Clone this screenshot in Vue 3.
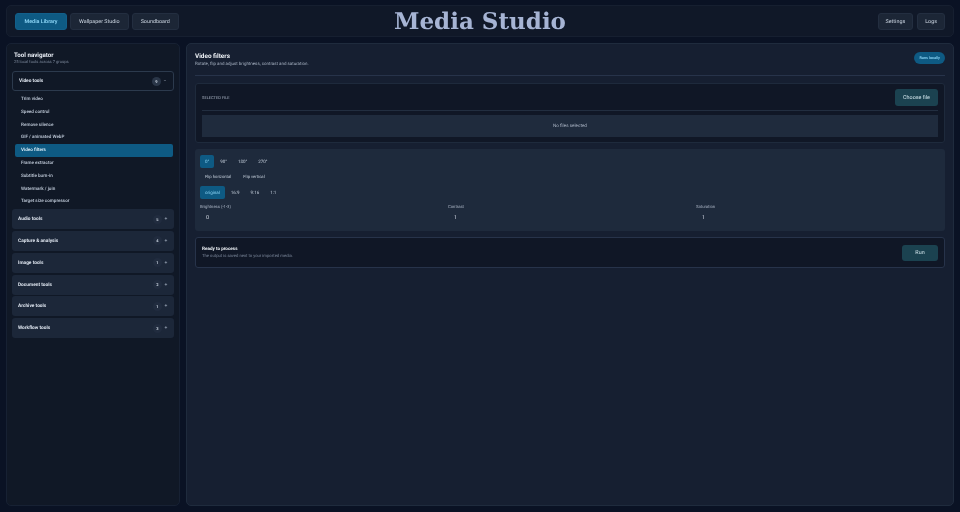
<script setup>
const tabs = [
  { label: 'Media Library', active: true },
  { label: 'Wallpaper Studio' },
  { label: 'Soundboard' }
]
const tools = ['Trim video', 'Speed control', 'Remove silence', 'GIF / animated WebP', 'Video filters', 'Frame extractor', 'Subtitle burn-in', 'Watermark / join', 'Target size compressor']
const groups = [
  ['Audio tools', 5], ['Capture & analysis', 4], ['Image tools', 1], ['Document tools', 2], ['Archive tools', 1], ['Workflow tools', 3]
]
const rotations = ['0°', '90°', '180°', '270°']
const aspects = ['original', '16:9', '9:16', '1:1']
const fields = [['Brightness (-1-3)', '0'], ['Contrast', '1'], ['Saturation', '1']]
</script>

<template>
  <div class="page">
    <header class="topbar">
      <nav class="tabs">
        <button v-for="t in tabs" :key="t.label" class="tab" :class="{ on: t.active }">{{ t.label }}</button>
      </nav>
      <h1 class="brand">Media Studio</h1>
      <div class="tabs end">
        <button class="tab">Settings</button>
        <button class="tab">Logs</button>
      </div>
    </header>

    <div class="body">
      <aside class="side">
        <h2>Tool navigator</h2>
        <p class="count">25 local tools across 7 groups</p>
        <div class="group open">
          <span>Video tools</span><i class="num">9</i><b class="sign">−</b>
        </div>
        <ul class="tools">
          <li v-for="t in tools" :key="t" :class="{ on: t === 'Video filters' }">{{ t }}</li>
        </ul>
        <div class="groups">
          <div v-for="g in groups" :key="g[0]" class="group">
            <span>{{ g[0] }}</span><i class="num">{{ g[1] }}</i><b class="sign">+</b>
          </div>
        </div>
      </aside>

      <main class="main">
        <div class="head">
          <div>
            <h2>Video filters</h2>
            <p>Rotate, flip and adjust brightness, contrast and saturation.</p>
          </div>
          <span class="badge">Runs locally</span>
        </div>

        <section class="panel file">
          <div class="file-top">
            <span class="eyebrow">SELECTED FILE</span>
            <button class="teal choose">Choose file</button>
          </div>
          <div class="drop">No files selected</div>
        </section>

        <section class="controls">
          <div class="row">
            <button v-for="(r, i) in rotations" :key="r" class="opt" :class="{ on: i === 0 }">{{ r }}</button>
          </div>
          <div class="row flips">
            <button class="opt">Flip horizontal</button>
            <button class="opt">Flip vertical</button>
          </div>
          <div class="row">
            <button v-for="(a, i) in aspects" :key="a" class="opt" :class="{ on: i === 0 }">{{ a }}</button>
          </div>
          <div class="fields">
            <label v-for="f in fields" :key="f[0]">
              <span>{{ f[0] }}</span>
              <em>{{ f[1] }}</em>
            </label>
          </div>
        </section>

        <section class="panel ready">
          <div>
            <strong>Ready to process</strong>
            <p>The output is saved next to your imported media.</p>
          </div>
          <button class="teal run">Run</button>
        </section>
      </main>
    </div>
  </div>
</template>

<style>
html, body { margin: 0; background: #0a1224; }
</style>

<style scoped>
* { box-sizing: border-box; }
.page {
  width: 960px; height: 512px; padding: 5px 6px 6px;
  display: flex; flex-direction: column; gap: 6px;
  background: #0a1224; color: #e2e8f0;
  font-family: Roboto, "Noto Sans", sans-serif; overflow: hidden;
  text-rendering: geometricPrecision;
  filter: blur(0.25px);
}
button { font-family: inherit; text-rendering: inherit; border: 0; cursor: pointer; }
h1, h2, p, ul { margin: 0; padding: 0; }
.topbar {
  height: 32px; flex: none; position: relative;
  display: flex; align-items: center; justify-content: space-between;
  padding: 0 8px; background: #101828; border: 1px solid #161f30; border-radius: 5px;
}
.tabs { display: flex; gap: 3px; }
.tabs.end { gap: 4px; }
.tab {
  height: 17px; padding: 1px 8px 0; font-size: 5.4px; color: #cbd5e1;
  background: #1c2636; border: 1px solid #232e40; border-radius: 3px;
}
.tabs.end .tab { padding: 1px 7px 0; }
.tab.on { padding: 1px 8.5px 0; background: #0e5a83; border-color: #125f8a; color: #8ad4f5; font-weight: 600; }
.brand {
  position: absolute; left: 0; right: 0; top: 0; text-align: center; line-height: 32px;
  font-family: "DejaVu Serif", serif; font-weight: 700; font-size: 23px; color: #a6b4d4;
  pointer-events: none;
}
.body { flex: 1; display: flex; gap: 6px; min-height: 0; }
.side {
  width: 174px; flex: none; padding: 7px 5px 6px;
  background: #101826; border: 1px solid #172133; border-radius: 5px;
}
.side h2 { font-size: 6.2px; line-height: 9px; font-weight: 700; color: #e6ebf3; margin-left: 2px; }
.count { font-size: 4.1px; line-height: 6px; color: #7c889b; margin: 0 0 5px 2px; }
.group {
  height: 20px; display: flex; align-items: center; padding: 0 4px 0 6px;
  background: #1c2739; border-radius: 3px; font-size: 4.8px; font-weight: 700; color: #dde4ee;
}
.group span { flex: 1; padding-top: 1px; }
.group.open { background: #101826; border: 1px solid #2c3a4d; }
.num {
  width: 9px; height: 9px; border-radius: 50%; background: #2a3648; text-align: center;
  line-height: 9px; font-style: normal; font-size: 4px; color: #cbd5e1;
}
.group:not(.open) .num { background: #212c3f; }
.sign { width: 8px; text-align: center; font-weight: 400; font-size: 5px; color: #a8b3c3; }
.tools { list-style: none; padding: 2px 1px 0 3px; margin-bottom: 1px; }
.tools li {
  height: 12.8px; line-height: 14px; padding-left: 6px; font-size: 4.6px; font-weight: 600;
  color: #b6c0cf; border-radius: 2px;
}
.tools li.on { background: #0e5a83; color: #d5e9f5; }
.groups { display: flex; flex-direction: column; gap: 1.8px; }
.main {
  flex: 1; min-width: 0; padding: 8px 8px 7px;
  background: #161f31; border: 1px solid #1f2b3d; border-radius: 5px;
  display: flex; flex-direction: column;
}
.head { display: flex; justify-content: space-between; align-items: flex-start; height: 24px; border-bottom: 1px solid #27334a; margin-bottom: 7px; }
.head h2 { font-size: 6.4px; line-height: 9px; color: #eef2f7; }
.head p { font-size: 4.45px; line-height: 7px; color: #a9b4c4; }
.badge {
  height: 12px; padding: 0 5px; line-height: 12px; border-radius: 6px;
  background: #0e5a83; color: #8ad4f5; font-size: 3.8px; font-weight: 600;
}
.panel { background: #101726; border: 1px solid #1e2a3c; border-radius: 3px; }
.file { height: 60px; padding: 5px 6px; margin-bottom: 6px; }
.file-top { height: 22px; display: flex; justify-content: space-between; align-items: center; border-bottom: 1px solid #222e40; padding-bottom: 4px; margin-bottom: 4px; }
.eyebrow { font-size: 4px; color: #aab4c4; }
.teal { background: #1b4250; color: #cfe3ea; border-radius: 3px; font-size: 5.4px; padding: 1px 0 0; }
.choose { width: 43px; height: 17px; }
.drop {
  height: 22px; padding-top: 1px; display: flex; align-items: center; justify-content: center;
  background: #1f2b3d; color: #aab4c4; font-size: 4.6px;
}
.controls {
  height: 82px; padding: 6px 5px; margin-bottom: 6px; background: #1e2a3c; border-radius: 3px;
  display: flex; flex-direction: column;
}
.row { display: flex; gap: 1px; height: 13px; margin-bottom: 2.5px; }
.flips { gap: 2px; }
.flips .opt { font-size: 4.2px; }
.opt { height: 13px; padding: 1px 5px 0; background: transparent; font-size: 4.5px; color: #c2ccd9; border-radius: 2px; }
.opt.on { background: #0e5a83; color: #8ad4f5; }
.fields { display: grid; grid-template-columns: repeat(3, 248px); margin-top: 2px; }
.fields label { display: flex; flex-direction: column; }
.fields span { font-size: 4.2px; line-height: 7px; color: #aab4c4; }
.fields em { font-style: normal; font-size: 5.4px; line-height: 15px; margin-left: 6px; color: #d7dee8; }
.ready { height: 31px; padding: 0 6px; display: flex; align-items: center; justify-content: space-between; border-color: #27334a; }
.ready strong { display: block; font-size: 4.6px; line-height: 6.5px; padding-top: 2px; color: #eef2f7; }
.ready p { font-size: 4.2px; line-height: 7px; color: #7c889b; }
.run { width: 36px; height: 16px; }
</style>
